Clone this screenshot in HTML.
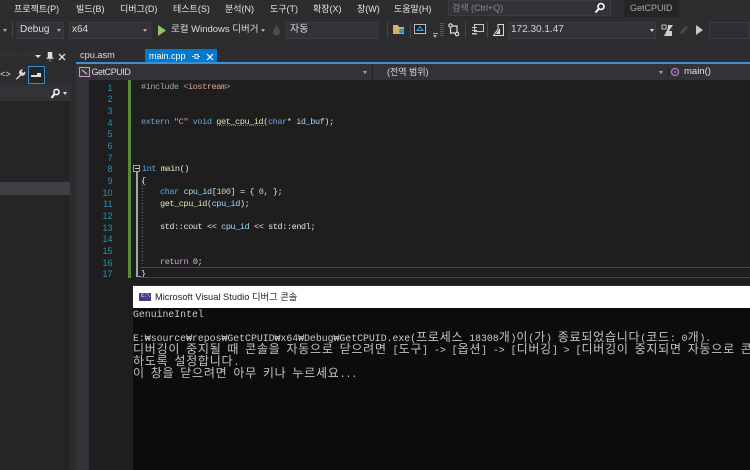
<!DOCTYPE html>
<html><head><meta charset="utf-8"><style>
html,body{margin:0;padding:0;width:750px;height:470px;overflow:hidden;background:#2d2d30}
body{position:relative;font-family:"Liberation Sans","Noto Sans CJK KR",sans-serif;color:#dcdcdc}
.a{position:absolute;white-space:nowrap}
.b{position:absolute}
.m{font-size:9px;line-height:16px;top:.5px;color:#e6e6e6}
.box{position:absolute;background:#333337;border:1px solid #3c3c40;box-sizing:border-box}
.t{font-size:10px;line-height:16px;color:#dcdcdc}
.ar{position:absolute;width:0;height:0;border-left:2.5px solid transparent;border-right:2.5px solid transparent;border-top:3px solid #aaa}
.sep{position:absolute;width:1px;height:16px;top:22px;background:#46464a}
.ln{position:absolute;left:88px;width:24.500px;text-align:right;font:9px/12px "Liberation Sans",sans-serif;color:#2b91af}
.c{position:absolute;white-space:pre;font:8.5px/12px "Liberation Mono",monospace;color:#e4e4e4;letter-spacing:-.4px}
.k{color:#62a8e4}.v{color:#9cdcfe}.f{color:#e4e4b4}.s{color:#e0a58c}.p{color:#d8a0df}.g{color:#a4a4a4}.n{color:#c0dab2}
.o{position:absolute;left:133px;white-space:pre;font:9.830px/12px "Liberation Mono",monospace;color:#cccccc}
.o b{font:400 12px/12px "Noto Sans CJK KR",sans-serif;letter-spacing:.76px;color:#c4c4c4}
</style></head><body>

<!-- menu -->
<div class="a m" style="left:14px">프로젝트(P)</div>
<div class="a m" style="left:76px">빌드(B)</div>
<div class="a m" style="left:120px">디버그(D)</div>
<div class="a m" style="left:173px">테스트(S)</div>
<div class="a m" style="left:225px">분석(N)</div>
<div class="a m" style="left:270px">도구(T)</div>
<div class="a m" style="left:313px">확장(X)</div>
<div class="a m" style="left:357px">창(W)</div>
<div class="a m" style="left:394px">도움말(H)</div>
<div class="box" style="left:448px;top:0;width:163px;height:16px;background:#333337"></div>
<div class="a" style="left:452px;top:0;font-size:9px;line-height:16px;color:#8a8a8a">검색 (Ctrl+Q)</div>
<svg class="b" style="left:594px;top:2px" width="12" height="12" viewBox="0 0 12 12"><circle cx="7" cy="4.5" r="3" fill="none" stroke="#fff" stroke-width="1.6"/><path d="M4.8 6.8L1.5 10.5" stroke="#fff" stroke-width="2"/></svg>
<div class="b" style="left:624px;top:0;width:55px;height:17px;background:#252526"></div>
<div class="a" style="left:630px;top:0;font-size:9px;line-height:16px;color:#a8a8a8">GetCPUID</div>

<!-- toolbar -->
<div class="ar" style="left:3px;top:29px"></div>
<div class="sep" style="left:12px"></div>
<div class="box" style="left:17px;top:22px;width:47px;height:17px"></div>
<div class="a t" style="left:20px;top:22px">Debug</div>
<div class="ar" style="left:57px;top:29px"></div>
<div class="box" style="left:69px;top:22px;width:82px;height:17px"></div>
<div class="a t" style="left:72px;top:22px">x64</div>
<div class="ar" style="left:143px;top:29px"></div>
<svg class="b" style="left:157px;top:25px" width="10" height="11"><path d="M1 0L9 5.500L1 11Z" fill="#8bc66b"/></svg>
<div class="a" style="left:171px;top:22px;font-size:9.500px;line-height:16px;color:#dcdcdc">로컬 Windows 디버거</div>
<div class="ar" style="left:261px;top:29px"></div>
<svg class="b" style="left:272px;top:25px" width="9" height="11"><path d="M4 0C6 3 8 4 8 7A3.500 3.500 0 0 1 1 7C1 5 3 4 4 0Z" fill="#4c4c4e"/></svg>
<div class="box" style="left:286px;top:22px;width:92px;height:17px"></div>
<div class="a t" style="left:290px;top:22px">자동</div>
<div class="sep" style="left:387px"></div>
<svg class="b" style="left:392px;top:23px" width="14" height="13"><path d="M1 2H6L7 4H12V11H1Z" fill="#d8b06a"/><circle cx="9.500" cy="8" r="2.500" fill="#3b86c4"/></svg>
<div class="sep" style="left:410px"></div>
<svg class="b" style="left:414px;top:23px" width="13" height="13"><rect x=".5" y="1.500" width="11" height="9" fill="#1f1f22" stroke="#bfbfbf"/><path d="M6 3.500L9 7.500H3Z" fill="none" stroke="#4ea3d8"/></svg>
<div class="b" style="left:433px;top:33px;width:5px;height:1px;background:#aaa"></div>
<div class="ar" style="left:433px;top:35px"></div>
<div class="b" style="left:440px;top:23px;width:4px;height:13px;background:repeating-linear-gradient(#55555a 0 1px,#2d2d30 1px 2px)"></div>
<svg class="b" style="left:448px;top:23px" width="12" height="14" fill="none" stroke="#e0e0e0" stroke-width="1.200"><circle cx="2.500" cy="2.500" r="1.700"/><circle cx="9" cy="11" r="1.700"/><path d="M4 3H9V9M2.500 5V10H7"/></svg>
<div class="sep" style="left:465px"></div>
<svg class="b" style="left:471px;top:24px" width="13" height="12"><rect x="3.500" y=".5" width="9" height="7" fill="none" stroke="#c8c8c8"/><rect x="1" y="3" width="5" height="1" fill="#c8c8c8"/><rect x="1" y="6" width="5" height="1" fill="#c8c8c8"/><rect x="1" y="9" width="5" height="1.500" fill="#c8c8c8"/></svg>
<div class="sep" style="left:487px"></div>
<svg class="b" style="left:493px;top:24px" width="11" height="12"><path d="M5 .5H10.500V11.500H.5L5 5Z" fill="none" stroke="#dcdcdc"/><path d="M3 10L7 4V10Z" fill="#dcdcdc"/></svg>
<div class="box" style="left:508px;top:22px;width:148px;height:17px"></div>
<div class="a t" style="left:511px;top:22px;color:#c8d4e0">172.30.1.47</div>
<div class="ar" style="left:650px;top:29px;border-top-color:#ddd"></div>
<svg class="b" style="left:661px;top:24px" width="13" height="13"><path d="M1 1H5V5H1Z" fill="none" stroke="#bdbdbd"/><path d="M7 1H12L8 7H11V12H3L6.500 5Z" fill="#cfcfcf"/></svg>
<svg class="b" style="left:679px;top:25px" width="10" height="10"><path d="M1 9L2 6L7 1L9 3L4 8Z" fill="#4c4c4e"/></svg>
<svg class="b" style="left:695px;top:24px" width="9" height="12"><path d="M1 1L8 6L1 11Z" fill="#c8c8c8"/></svg>
<div class="box" style="left:709px;top:22px;width:41px;height:17px;background:#2f2f33"></div>

<!-- left panel -->
<div class="b" style="left:0;top:48px;width:70px;height:422px;background:#252526"></div>
<div class="b" style="left:0;top:48px;width:70px;height:17px;background:#2d2d30"></div>
<div class="b" style="left:0;top:65px;width:70px;height:20px;background:#2d2d30"></div>
<div class="b" style="left:0;top:85px;width:70px;height:16px;background:#333337"></div>
<div class="b" style="left:0;top:182px;width:70px;height:13px;background:#3f3f46"></div>
<div class="b" style="left:0;top:53px;width:34px;height:4px;background:repeating-linear-gradient(90deg,#3a3a3d 0 1px,#2d2d30 1px 3px)"></div>
<div class="ar" style="left:35px;top:55px;border-top-color:#e0e0e0;border-left-width:3px;border-right-width:3px"></div>
<svg class="b" style="left:46px;top:52px" width="8" height="10"><path d="M2 0H6V5L7.500 6.500H.5L2 5ZM4 6.500V10" fill="#ddd" stroke="#ddd" stroke-width=".5"/></svg>
<svg class="b" style="left:58px;top:53px" width="8" height="8"><path d="M1 1L7 7M7 1L1 7" stroke="#ddd" stroke-width="1.300"/></svg>
<div class="a" style="left:0;top:66px;font:9px/18px 'Liberation Mono',monospace;color:#ddd">&lt;&gt;</div>
<svg class="b" style="left:14px;top:68px" width="12" height="12"><path d="M1.500 11L6 6.500A3 3 0 0 1 9 1.500L7.500 3.500L9 5L11 3.500A3 3 0 0 1 7 7.500L3 11.500Z" fill="#d8d8d8"/></svg>
<div class="b" style="left:28px;top:66px;width:17px;height:18px;box-sizing:border-box;border:1px solid #3c8bd0;background:#252526"></div>
<div class="b" style="left:31px;top:75px;width:10px;height:2px;background:#ddd"></div>
<div class="b" style="left:37px;top:73px;width:4px;height:2px;background:#ddd"></div>
<svg class="b" style="left:50px;top:88px" width="11" height="11"><circle cx="6.500" cy="4" r="2.600" fill="none" stroke="#fff" stroke-width="1.500"/><path d="M4.500 6L1.500 10" stroke="#fff" stroke-width="2"/></svg>
<div class="ar" style="left:63px;top:92px;border-top-color:#ddd"></div>

<!-- tabs -->
<div class="a" style="left:80px;top:48px;font-size:9.200px;line-height:15px;color:#dcdcdc">cpu.asm</div>
<div class="b" style="left:145px;top:48.500px;width:72px;height:14px;background:#007acc"></div>
<div class="a" style="left:149px;top:49px;font-size:9px;line-height:14px;color:#fff">main.cpp</div>
<svg class="b" style="left:192px;top:52px" width="8" height="9"><path d="M0 4.500H2M3 2.500H6V6.500H3ZM6 4.500H8" fill="none" stroke="#e8f2fa"/></svg>
<svg class="b" style="left:206px;top:53px" width="8" height="8"><path d="M1 1L7 7M7 1L1 7" stroke="#fff" stroke-width="1.200"/></svg>
<div class="b" style="left:76px;top:62px;width:674px;height:2px;background:#3a90d8"></div>

<!-- nav bar -->
<div class="b" style="left:76px;top:64px;width:674px;height:16px;background:#333337"></div>
<svg class="b" style="left:79px;top:67px" width="11" height="10"><rect x=".5" y=".5" width="10" height="9" fill="#3a3a3e" stroke="#c79bd8"/><path d="M3 3L8 7" stroke="#ddd"/></svg>
<div class="a" style="left:91.500px;top:64px;font-size:9px;letter-spacing:-.45px;line-height:16px;color:#dcdcdc">GetCPUID</div>
<div class="ar" style="left:363px;top:71px"></div>
<div class="b" style="left:372px;top:64px;width:1px;height:16px;background:#252526"></div>
<div class="a" style="left:387px;top:64px;font-size:9px;line-height:16px;color:#dcdcdc">(전역 범위)</div>
<div class="ar" style="left:659px;top:71px"></div>
<div class="b" style="left:668px;top:64px;width:1px;height:16px;background:#252526"></div>
<svg class="b" style="left:670px;top:67px" width="10" height="10"><circle cx="5" cy="5" r="3.500" fill="none" stroke="#b180d7" stroke-width="1.300"/><circle cx="5" cy="5" r="1" fill="#b180d7"/></svg>
<div class="a" style="left:684px;top:64px;font-size:9.500px;line-height:16px;color:#e0e0e0">main()</div>

<!-- editor -->
<div class="b" style="left:76px;top:80px;width:674px;height:390px;background:#1e1e1e"></div>
<div class="b" style="left:76px;top:80px;width:13px;height:390px;background:#333337"></div>
<div class="b" style="left:128px;top:80px;width:3px;height:198px;background:#5a8a35"></div>
<div class="ln" style="top:81.500px">1</div><div class="ln" style="top:93.200px">2</div><div class="ln" style="top:104.800px">3</div><div class="ln" style="top:116.500px">4</div><div class="ln" style="top:128.200px">5</div><div class="ln" style="top:139.900px">6</div><div class="ln" style="top:151.500px">7</div><div class="ln" style="top:163.200px">8</div><div class="ln" style="top:174.900px">9</div><div class="ln" style="top:186.500px">10</div><div class="ln" style="top:198.200px">11</div><div class="ln" style="top:209.900px">12</div><div class="ln" style="top:221.500px">13</div><div class="ln" style="top:233.200px">14</div><div class="ln" style="top:244.900px">15</div><div class="ln" style="top:256.500px">16</div><div class="ln" style="top:268.200px">17</div>

<div class="c" style="left:141px;top:81px"><span class="g">#include &lt;</span><span class="s">iostream</span><span class="g">&gt;</span></div>
<div class="c" style="left:141px;top:116px"><span class="k">extern</span> <span class="s">"C"</span> <span class="k">void</span> <span class="f">get_cpu_id</span>(<span class="k">char</span>* <span class="v">id_buf</span>);</div>
<div class="b" style="left:217px;top:125px;width:48px;height:1px;background:repeating-linear-gradient(90deg,#5a9a45 0 1px,#1e1e1e 1px 2px)"></div>
<div class="c" style="left:142px;top:163px"><span class="k">int</span> <span class="f">main</span>()</div>
<div class="c" style="left:141px;top:175px">{</div>
<div class="c" style="left:160px;top:186px"><span class="k">char</span> <span class="v">cpu_id</span>[<span class="n">100</span>] = { <span class="n">0</span>, };</div>
<div class="c" style="left:160px;top:198px"><span class="f">get_cpu_id</span>(<span class="v">cpu_id</span>);</div>
<div class="c" style="left:160px;top:221px">std::cout &lt;&lt; <span class="v">cpu_id</span> &lt;&lt; std::endl;</div>
<div class="c" style="left:160px;top:256px"><span class="p">return</span> <span class="n">0</span>;</div>
<div class="c" style="left:141px;top:268px">}</div>

<div class="b" style="left:133px;top:165px;width:7px;height:7px;box-sizing:border-box;border:1px solid #a5a5a5;background:#1e1e1e"></div>
<div class="b" style="left:134.500px;top:168px;width:4px;height:1px;background:#ccc"></div>
<div class="b" style="left:136px;top:172px;width:2px;height:104px;background:#a5a5a5"></div>
<div class="b" style="left:136px;top:276px;width:5px;height:1px;background:#a5a5a5"></div>
<div class="b" style="left:142px;top:182px;width:1px;height:84px;background:repeating-linear-gradient(#777 0 1px,#1e1e1e 1px 3px)"></div>
<div class="b" style="left:140px;top:267px;width:610px;height:11px;box-sizing:border-box;border-top:1px solid #444;border-bottom:1px solid #444"></div>

<!-- console window -->
<div class="b" style="left:133px;top:285px;width:617px;height:185px;background:#0c0c0c"></div>
<div class="b" style="left:133px;top:285px;width:617px;height:1px;background:#333"></div>
<div class="b" style="left:133px;top:286px;width:617px;height:22px;background:#fff"></div>
<div class="b" style="left:139px;top:293px;width:12px;height:8px;background:#4b3a86"></div>
<div class="a" style="left:141px;top:293px;font:bold 5px/7px 'Liberation Mono',monospace;color:#ddd">C:\</div>
<div class="a" style="left:155px;top:289px;font-size:9.300px;line-height:16px;color:#222">Microsoft Visual Studio 디버그 콘솔</div>

<div class="o" style="top:309px">GenuineIntel</div>
<div class="o" style="top:331px">E:₩source₩repos₩GetCPUID₩x64₩Debug₩GetCPUID.exe(<b>프로세스</b> 18308<b>개</b>)<b>이</b>(<b>가</b>) <b>종료되었습니다</b>(<b>코드</b>: 0<b>개</b>).</div>
<div class="o" style="top:343px"><b>디버깅이</b> <b>중지될</b> <b>때</b> <b>콘솔을</b> <b>자동으로</b> <b>닫으려면</b> [<b>도구</b>] -&gt; [<b>옵션</b>] -&gt; [<b>디버깅</b>] &gt; [<b>디버깅이</b> <b>중지되면</b> <b>자동으로</b> <b>콘</b></div>
<div class="o" style="top:355px"><b>하도록</b> <b>설정합니다</b>.</div>
<div class="o" style="top:367px"><b>이</b> <b>창을</b> <b>닫으려면</b> <b>아무</b> <b>키나</b> <b>누르세요</b>...</div>

</body></html>
